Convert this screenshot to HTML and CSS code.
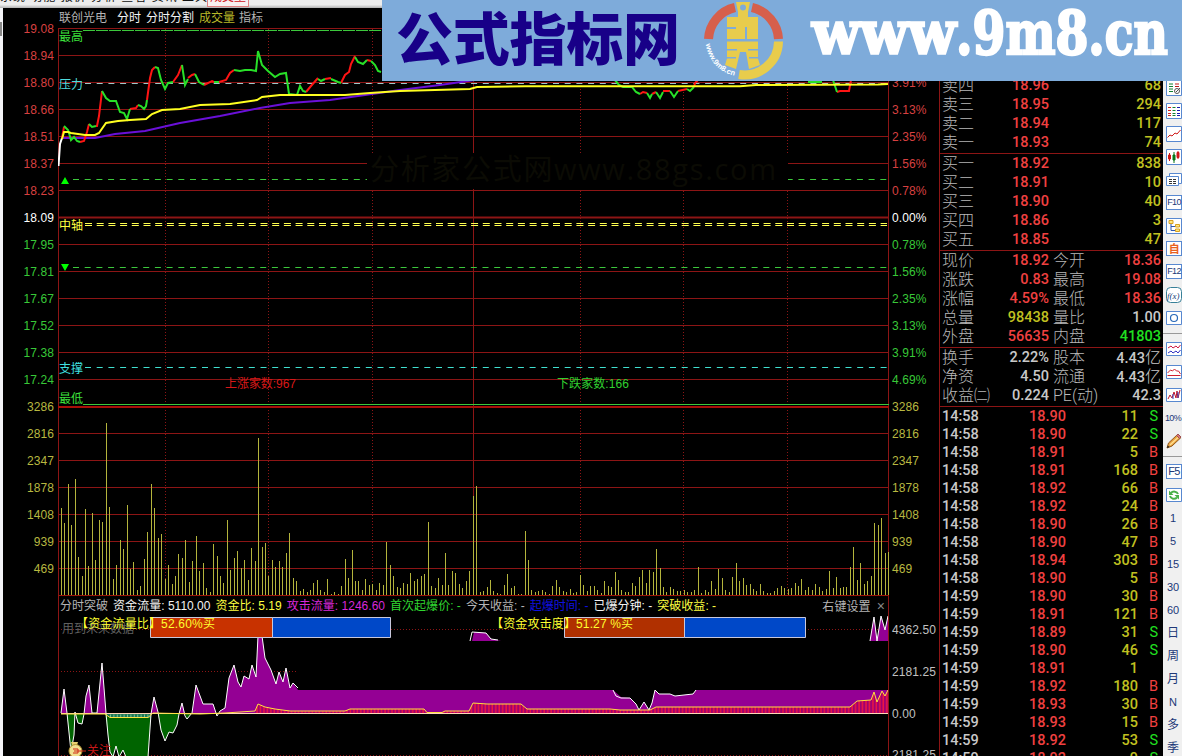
FILE: index.html
```html
<!DOCTYPE html>
<html lang="zh-CN">
<head>
  <meta charset="UTF-8" />
  <title>联创光电 分时</title>
  <link rel="stylesheet" href="styles.css">
</head>
<body>
  <div class="menubar">
    <div class="menu">系统 功能 报价 分析 查看 资讯 工具</div>
    <div class="menu-tab"><span>成交量</span></div>
  </div>

  <div class="terminal">
    <div class="edge"><i></i></div>
    <div class="axis axis-left" id="axis-left"></div>

    <div class="plot">
      <div class="plot-title">
        <span class="gray first">联创光电</span><span class="white">分时</span><span class="white">分时分割</span><span class="olive">成交量</span><span class="gray">指标</span>
      </div>

      <svg class="price" viewBox="58 26 832 570" width="832" height="570">
        <g id="grid" stroke="#8c1515"></g>
        <g stroke="#8c1515" stroke-dasharray="1 2">
          <path d="M165.5 29V595M268.5 29V595M372.5 29V595M580.5 29V595M683.5 29V595M787.5 29V595" />
        </g>
        <path d="M58.5 28V596M473.5 28V595M888.5 28V596" stroke="#8c1515" />
        <path d="M58 217.5H889" stroke="#8c1515" stroke-width="2" />
        <path d="M58 407H889" stroke="#a81008" stroke-width="2" />
        <path d="M58 595.5H889" stroke="#9c1408" />

        <path d="M83 30.5H889" stroke="#3cc83c" stroke-dasharray="12 1" />
        <path d="M85 83.5H889" stroke="#9fc9c9" stroke-dasharray="6 5.7" />
        <path d="M73 179.5H887M73 267.5H887" stroke="#3cc83c" stroke-dasharray="6 5.7" />
        <path d="M85 223.5H887M85 225.5H887" stroke="#ffff50" stroke-dasharray="7 4.7" />
        <path d="M85 367.5H887" stroke="#40e0d0" stroke-dasharray="6 5.7" />
        <path d="M83 404.5H889" stroke="#3cc83c" />
        <path d="M61 184h8l-4-7zM61 264h8l-4 7z" fill="#00ff00" />

        <path class="mask" d="M367 153H788V189H367z" />
        <text class="watermark" x="370" y="180" textLength="406">分析家公式网www.88gs.com</text>

        <g class="lines">
          <path stroke="#6a10d8" d="M61 138L95 138L115 134L145 131L180 123L220 116L260 108L290 103L330 100L365 95L400 90L440 85L475 80" />
          <path stroke="#ffffff" stroke-width="1.2" d="M58.5 166L60 144L62 138" />
          <path stroke="#ff1414" d="M62 138L64 127M80 142L84 141L87 132L89 124M96 126L97 126L99 116L102 91M130 109L136 108L138 105M147 100L150 78L152 70L155 67M173 82L178 75L182 65M188 78L192 75L195 74M204 85L212 81L214 82M219 82L226 80L230 73L234 70M306 92L311 86L318 78M325 79L331 78M341 83L345 75L349 72L351 64L355 56M367 60L371 61M640 94L643 92L647 93M652 94L656 92M663 91L670 91M678 91L687 89M694 87L695 83L698 80M837 92L840 91L849 91L851 80" />
          <path stroke="#28e028" d="M64 126L68 130L69 133L71 140L74 137L77 141L80 142M89 124L92 127L96 126M102 91L106 98L110 101L116 101L120 112L124 113L127 119L130 109M138 105L141 106L144 109L146 106L147 100M155 67L158 68L161 80L165 89L168 83L173 82M182 65L185 85L188 79M195 74L199 82L204 85M214 82L219 82M234 70L240 71L245 70L251 70L256 71L258 51L262 65L268 71L275 77L280 74L286 73L289 94L297 95L300 86L303 91L306 92M318 79L321 81L325 79M331 79L338 82L341 83M355 57L358 62L363 64L367 60M371 61L375 65L378 71L381 72M614 79L619 85L623 87L632 87L636 92L640 94M647 93L650 98L652 94M656 92L660 98L663 92M670 91L674 97L678 91M687 89L690 91L694 87M808 82L822 82M833 80L837 92" />
          <path stroke="#ffff20" d="M62 139L64 132L68 132L71 133L78 134L85 135L95 135L99 133L106 123L118 121L130 120L146 119L152 114L162 110L180 109L200 105L230 104L257 100L262 97L280 95L345 95L370 93L400 91L470 89L477 87L525 86.3L740 86.3L756 85L878 84.5L888 84" />
        </g>

        <path id="volume" stroke="#b4b43c" fill="none" />

        <g class="tags">
          <text x="59" y="41" fill="#3ce03c">最高</text>
          <text x="59" y="89" fill="#50dcdc">压力</text>
          <text x="59" y="230" fill="#ffff40">中轴</text>
          <text x="59" y="373" fill="#40e0e0">支撑</text>
          <text x="59" y="403" fill="#3ce03c">最低</text>
          <text x="225" y="388" fill="#d81818" textLength="71">上涨家数:967</text>
          <text x="557" y="388" fill="#30d030" textLength="72">下跌家数:166</text>
        </g>
      </svg>

      <div class="ind-head">
        <span class="gray">分时突破</span><span class="white">资金流量: 5110.00</span><span class="yellow">资金比: 5.19</span><span class="magenta">攻击流量: 1246.60</span><span class="green">首次起爆价: -</span><span class="gray">今天收益: -</span><span class="blue">起爆时间: -</span><span class="white">已爆分钟: -</span><span class="yellow">突破收益: -</span>
        <span class="gray settings">右键设置 <b>×</b></span>
      </div>

      <svg class="indicator" viewBox="58 614 832 142" width="832" height="142">
        <defs>
          <clipPath id="above"><path d="M58 600H890V713.5H58z" /></clipPath>
          <clipPath id="below"><path d="M58 713.5H890V756H58z" /></clipPath>
          <pattern id="hatch" width="3.46" height="4" patternUnits="userSpaceOnUse">
            <path d="M0 0H3.46V4H0z" fill="#a00070" />
            <path d="M1 0V4" stroke="#f01840" stroke-width="1.4" />
          </pattern>
        </defs>
        <path d="M61 629.5H889M61 671.5H298M61 755.5H889" stroke="#8c1515" stroke-dasharray="1 2" />
        <path clip-path="url(#above)" fill="#940094" d="M61 713L64 689L67 713H84L86 696L89 685L92 713H97L102 663L106 713H151L154 697L158 713H179L182 703L185 714H192L196 685L203 704H213L217 716L220 711L225 708L229 678L234 665L238 682L241 687L244 676L249 679L252 665L256 677L258 636H262L265 658L271 670L276 684L279 672L283 682L286 668L290 688L293 683L298 690H613L621 697L630 698L636 704L639 710L644 702L649 710L652 703L655 690L659 694L670 694L675 696L693 694L696 690H888V714H61z" />
        <path clip-path="url(#below)" fill="#006400" d="M67 713L71 752L74 735L75 713L78 723L82 724L84 713M105 713L108 735L110 752L113 757L116 746L119 757L123 750L126 757H148L151 713M158 713L161 730L165 741L169 732L173 733L177 725L179 713M185 713L187 719L192 713" />
        <path d="M472 641L474 632L486 633L491 639L501 641zM870 641L874 617L877 641L881 616L885 630L888 616V641z" fill="#940094" />
        <path d="M106 713.5H151V718H110z" fill="#207858" />
        <path d="M110 716H150" stroke="#70c890" stroke-width="3" stroke-dasharray="1 2.4" />
        <path fill="url(#hatch)" d="M255 713L258 704L265 707L275 709L290 711L345 711L350 709H424L427 712H442L445 711H469L473 703L487 704H521L527 709H610L620 710H650L656 707H850L857 701L871 700L874 692L877 702L882 691L885 696L888 690V713z" />
        <g fill="none" stroke="#ffffff">
          <path d="M61 713L64 689L67 713L71 752L74 735L75 712L78 723L82 724L84 714L86 696L89 685L92 713H97L102 663L106 713L108 735L110 752L113 757L116 746L119 757L123 750L126 757M148 757L151 714L154 697L158 712L161 730L165 741L169 732L173 733L177 725L179 714L182 703L185 716L187 719L192 713L196 685L203 704H213L217 716L220 711L225 708L229 678L234 665L238 682L241 687L244 676L249 679L252 665L256 677L258 636M262 636L265 658L271 670L276 684L279 672L283 682L286 668L290 688L293 683L298 688" />
          <path d="M470 641L472 632L486 633L491 639L498 640M613 690L616 696L621 698L630 698L636 704L639 710L644 702L649 710L652 703L655 690L659 694L670 694L675 696L693 694L696 690M870 641L874 617L877 641L881 616L885 630L888 616" />
          <path d="M61 713.5H889" stroke="#ffd8b8" />
        </g>
        <path fill="none" stroke="#ffe040" d="M61 714H105L110 717.5H148L153 713L200 714L225 713L255 711L258 704L265 707L275 709L290 711L345 711L350 709H424L427 712.5H442L445 711H469L473 703L487 704H521L527 709H610L620 710H650L656 707H850L857 701L871 700L874 692L877 702L882 691L885 696L888 690" />
        <path d="M58.5 614V756M888.5 614V756" stroke="#8c1515" />
        <text class="future" x="62" y="633">用到未来数据</text>

        <g stroke="#c8c8dc">
          <path d="M150.5 617.5H272.5V637.5H150.5z" fill="#c83200" />
          <path d="M272.5 617.5H390.5V637.5H272.5z" fill="#0048c8" />
          <path d="M564.5 617.5H684.5V637.5H564.5z" fill="#b03000" />
          <path d="M684.5 617.5H805.5V637.5H684.5z" fill="#0048c8" />
        </g>
        <g class="tags" fill="#ffff30">
          <text x="76" y="628" textLength="85">【资金流量比】</text>
          <text x="161" y="628" textLength="54">52.60%买</text>
          <text x="491" y="628" textLength="85">【资金攻击度】</text>
          <text x="576" y="628" textLength="57">51.27 %买</text>
          <text x="87" y="755" fill="#c81818">关注</text>
        </g>
        <path d="M71 742h7l-1 3h-5z" fill="#e8d070" />
        <circle cx="75.5" cy="751" r="6.5" fill="#f0e090" stroke="#b09030" />
        <path d="M73 749h5v4h-5M74 751h12" stroke="#d02818" fill="none" />
      </svg>
    </div>

    <div class="axis axis-right" id="axis-right">
      <div class="ind-axis"><span>4362.50</span><span>2181.25</span><span>0.00</span><span>2181.25</span></div>
    </div>

    <div class="quotes">
      <div class="book" id="book"></div>
      <div class="ticks" id="ticks"></div>
    </div>

    <div class="sidebar">
      <div class="tool"><svg viewBox="0 0 16 16"><path class="frame" d="M.5.5h15v15H.5z" /><path d="M3 4h4M3 6.500h4M3 9h4M3 11.500h4" stroke="#108030" /><path d="M9 4h4M9 6.500h4" stroke="#c01818" /><circle cx="11" cy="11" r="2.500" stroke="#555" /><path d="M10 12l4-4" stroke="#555" /></svg></div>
      <div class="tool"><svg viewBox="0 0 16 16"><path class="frame" d="M.5.5h15v15H.5z" /><path d="M2 4.500h3M2 7.500h3M2 10.500h3M2 12.500h3" stroke="#d02020" /><path d="M6.500 4.500h3M6.500 7.500h3M6.500 10.500h3M6.500 12.500h3" stroke="#108030" /><path d="M11 4.500h3M11 7.500h3M11 10.500h3M11 12.500h3" stroke="#1818b0" /></svg></div>
      <div class="tool"><svg viewBox="0 0 16 16"><path class="frame" d="M.5.5h15v15H.5z" /><path d="M1.500 11.500L4 9l2 1 3-3 2 1 3.500-4" stroke="#d01818" /></svg></div>
      <div class="tool"><svg viewBox="0 0 16 16"><path class="frame" d="M.5.5h15v15H.5z" /><path d="M2.500 6h2v4h-2zM11 3.500h2v5h-2z" fill="#d01818" stroke="#d01818" /><path d="M3.500 4v8M12 2v8" stroke="#d01818" /><path d="M7 6h2v5H7zM8 3v11" fill="#087818" stroke="#087818" /></svg></div>
      <div class="tool"><svg viewBox="0 0 16 16"><path class="frame" d="M3.500 1.500h12v10h-12z" /><path class="frame" d="M.5 4.500h12v9H.5z" /><path d="M3 7.500h3M7 7.500h3M3 9.500h3M7 9.500h3M3 11.500h3M7 11.500h3" stroke="#333" /></svg></div>
      <div class="tool boxed">F10</div>
      <div class="tool"><svg viewBox="0 0 16 16"><path class="frame" d="M.5.5h15v15H.5z" /><path d="M5 6v6.500h4M5 8.500h4" stroke="#3058b0" /><path d="M3 2.500h4v3H3zM9.500 6.500h4v2.500h-4zM9.500 11h4v2.500h-4z" fill="#ffe880" stroke="#d8a020" /></svg></div>
      <div class="tool boxed self">自</div>
      <div class="tool boxed">F12</div>
      <div class="tool"><svg viewBox="0 0 16 16"><rect x=".5" y=".5" width="15" height="15" rx="4" fill="#fff" stroke="#388098" /><text class="fx" x="1" y="12">f(x)</text></svg></div>
      <div class="tool"><svg viewBox="0 0 16 16"><path class="frame" d="M.5 1.500h15v13H.5z" /><circle cx="8" cy="8" r="3.500" stroke="#2868b8" stroke-width="1.200" /></svg></div>
      <hr>
      <div class="tool"><svg viewBox="0 0 16 16"><path class="frame" d="M.5 1.500h15v13H.5z" /><path d="M2 7l3-2 2 2 3-2 2 2 2.500-3" stroke="#d01840" /><path d="M2 12l3-2 2 2 3-2 2 2 2.500-3" stroke="#3030c0" /></svg></div>
      <div class="tool"><svg viewBox="0 0 16 16"><path class="frame" d="M.5 1.500h15v13H.5z" /><path d="M1.500 9l3-3 2 1 2-2 2 2h2l2 3M1.500 11.500h13" stroke="#d02030" /></svg></div>
      <div class="tool"><svg viewBox="0 0 16 16"><path class="frame" d="M.5 1.500h15v13H.5z" /><path d="M2 12l2-4 2 3 2-6 2 6 1-7 1 7 2-8" stroke="#c01830" /><path d="M7 7v5M12 5v6" stroke="#3040c0" /></svg></div>
      <div class="tool label narrow">10%</div>
      <div class="tool"><svg viewBox="0 0 16 16"><path d="M1 15l1.500-5L11 2l3.500 3L6 13z" fill="#e8a040" stroke="#905818" /><path d="M4 12l8-7.500" stroke="#ffe090" stroke-width="1.500" /><path d="M10.500 2.500L12 1l3 3-1.500 1.500z" fill="#d87878" stroke="#a05050" /><path d="M1 15l.8-2.500L3.500 14z" fill="#222" /></svg></div>
      <hr>
      <div class="tool boxed f5">F5</div>
      <div class="tool"><svg viewBox="0 0 16 16"><path class="frame" d="M.5 1.500h15v13H.5z" /><path d="M12 7a4 3.500 0 0 0-7-1M4 9a4 3.500 0 0 0 7 1.500" stroke="#48b048" stroke-width="2" /><path d="M3 3.500v4.500h4.500zM13 12.500V8H8.500z" fill="#48b048" /></svg></div>
      <div class="tool label">1</div>
      <div class="tool label">5</div>
      <div class="tool label">15</div>
      <div class="tool label">30</div>
      <div class="tool label">60</div>
      <div class="tool label cjk">日</div>
      <div class="tool label cjk">周</div>
      <div class="tool label cjk">月</div>
      <div class="tool label">N</div>
      <div class="tool label cjk">多</div>
      <div class="tool label cjk">季</div>
    </div>
  </div>

  <svg class="banner" viewBox="0 0 800 81" width="800" height="81">
    <text class="banner-cn" x="14" y="60" textLength="284">公式指标网</text>
    <g fill="none" stroke-width="9">
      <path d="M326.500 39A34 34 0 0 1 353 7.500M370 7.500A34 34 0 0 1 396.500 39" stroke="#d65f4c" />
      <path d="M396.500 41.500A34 34 0 0 1 357 74.500" stroke="#e8cc4c" />
    </g>
    <g fill="#e8cc4c">
      <path d="M354 2H368L366 12V17H376V39H365V27H363V39H345V29H354V27H345V17H356V12z" />
      <path d="M345 41.500H376V49H366V50.500H376V57H367V58.500H376L378 65L367 69L364 52H358L354 69L343 65L345 58.500H354V57H345V50.500H355V49H345z" />
      <circle cx="361" cy="7.500" r="3" fill="#7eabda" />
    </g>
    <path id="seal-arc" d="M324 44A36 36 0 0 0 354 76" fill="none" />
    <text class="seal"><textPath href="#seal-arc">www.9m8.cn</textPath></text>
    <g class="banner-url">
      <text x="430" y="54" textLength="144" lengthAdjust="spacingAndGlyphs">www</text>
      <text x="574" y="54" textLength="212" lengthAdjust="spacingAndGlyphs">.9m8.cn</text>
    </g>
  </svg>

  <script src="script.js"></script>
</body>
</html>
```
FILE: styles.css
```css
body {
  margin: 0;
  width: 1182px;
  height: 756px;
  overflow: hidden;
  position: relative;
  background: #000;
  color: #c0c0c0;
  font: 12px/18px "Liberation Sans", "Noto Sans CJK SC", sans-serif;
}
.menubar {
  display: flex;
  height: 8px;
  overflow: hidden;
  background: linear-gradient(#ececec 60%, #b0b0b0);
  color: #111;
}
.menu {
  width: 207px;
  margin-top: -12px;
  white-space: nowrap;
  letter-spacing: 1px;
}
.menu-tab {
  width: 40px;
  height: 6px;
  border: 1px solid #e08080;
  border-top: 0;
  background: #f8f0f0;
  color: #d01020;
  text-align: center;
  overflow: hidden;
}
.menu-tab span {
  display: block;
  margin-top: -12px;
}
.terminal {
  display: grid;
  grid-template-columns: 3px 55px 832px 49px 224px 19px;
  height: 748px;
}
.edge {
  background: #f4f4f8;
}
.edge i {
  display: block;
  width: 2px;
  height: 14px;
  margin-top: 14px;
  background: #888;
}

/* axes */
.axis {
  padding-top: 7px;
  letter-spacing: 0.1px;
}
.axis div.row {
  flex: none;
  height: 27px;
  line-height: 28px;
}
.axis-left {
  text-align: right;
  padding-right: 4px;
}
.axis-right {
  display: flex;
  flex-direction: column;
  padding-left: 2px;
  height: 741px;
  overflow: hidden;
}
.up { color: #d84040; }
.mid { color: #fff; }
.down { color: #38c838; }
.vol { color: #b8b840; }
.ind-axis {
  flex: none;
  order: 1;
  padding-top: 27px;
  display: flex;
  flex-direction: column;
}
.ind-axis span {
  height: 41.8px;
  line-height: 42px;
}

/* chart */
.plot-title {
  display: flex;
  gap: 5px;
  height: 18px;
  padding-left: 1px;
  line-height: 20px;
}
.plot-title .first {
  margin-right: 5px;
}
.plot-title .olive {
  margin-right: -1px;
}
.plot svg {
  display: block;
}
.gray { color: #b4b4b4; }
.white { color: #f4f4f4; }
.olive { color: #b8b828; }
.yellow { color: #ffff40; }
.magenta { color: #d828d8; }
.green { color: #30d830; }
.blue { color: #1010e0; }
.mask { fill: #000; }
.watermark {
  font: 29px "Open Sans", "Noto Sans CJK SC", sans-serif;
  fill: #0b0b04;
}
.lines path {
  fill: none;
  stroke-width: 2;
}
.tags {
  font-size: 12px;
}
.future {
  fill: #606060;
}
.ind-head {
  display: flex;
  gap: 5px;
  height: 18px;
  margin-right: 1px;
  padding-left: 1px;
  border-left: 1px solid #8c1515;
  border-right: 1px solid #8c1515;
  box-sizing: border-box;
  white-space: nowrap;
  line-height: 20px;
  letter-spacing: 0.02px;
}
.settings {
  margin-left: auto;
  padding-right: 3px;
}
.settings b {
  font-weight: normal;
  font-size: 14px;
  margin-left: 3px;
  color: #888;
}

/* quotes */
.quotes {
  border-left: 1px solid #8c1515;
  height: 748px;
  overflow: hidden;
  font-family: Roboto, "Noto Sans CJK SC", sans-serif;
  font-size: 14.5px;
  font-weight: 500;
}
.book {
  padding-top: 68px;
}
.book .line {
  display: grid;
  grid-template-columns: 52px 55px 52px 60px;
  height: 19px;
  line-height: 20px;
  padding-left: 2px;
}
.book .line span {
  text-align: right;
  white-space: nowrap;
}
.book .line .name {
  text-align: left;
  font-size: 16px;
  font-weight: 300;
  color: #b8b8b8;
}
.book .line .name:nth-child(3) {
  padding-left: 4px;
}
.book em {
  font: 300 16px/16px "Noto Sans CJK SC", sans-serif;
}
.book .rule {
  margin-top: 1px;
  border-top: 1px solid #8c1515;
}
.red { color: #f04040; }
.qty { color: #c0c020; }
.lime { color: #20e020; }
.plain { color: #c8c8c8; }
.ticks {
  margin-top: 1px;
  padding-top: 1px;
  border-top: 1px solid #8c1515;
}
.tick {
  display: grid;
  grid-template-columns: 60px 64px 72px 20px;
  height: 18px;
  padding-left: 2px;
  line-height: 18px;
}
.tick span {
  text-align: right;
}
.tick .time {
  text-align: left;
}
.tick .side {
  font-weight: normal;
}

/* right toolbar */
.sidebar {
  display: flex;
  flex-direction: column;
  background: #f0f0f0;
  padding-top: 68px;
  height: 680px;
  overflow: hidden;
  color: #203878;
}
.tool {
  height: 23px;
  flex: none;
  display: flex;
  align-items: center;
  padding-left: 3px;
}
.tool svg {
  width: 16px;
  height: 16px;
  flex: none;
  fill: none;
}
.tool .frame {
  fill: #fff;
  stroke: #5888d0;
}
.tool .fx {
  font: italic 9px "Liberation Serif", serif;
  fill: #104078;
}
.boxed {
  box-sizing: border-box;
  height: 15px;
  width: 16px;
  margin: 4px 0 4px 3px;
  padding: 0;
  justify-content: center;
  border: 1px solid #5888d0;
  background: #fff;
  font: 9px/13px "Liberation Sans", sans-serif;
  letter-spacing: -0.6px;
}
.f5 {
  font-size: 11px;
}
.self {
  color: #e86020;
  font: bold 11px/13px "Noto Sans CJK SC", sans-serif;
}
.label {
  width: 14px;
  justify-content: center;
  font-size: 11px;
}
.cjk {
  font-size: 12px;
}
.narrow {
  font-size: 9px;
  letter-spacing: -0.6px;
}
.sidebar hr {
  width: 19px;
  height: 1px;
  flex: none;
  margin: 4px 0 3px;
  border: 0;
  background: #999;
}

/* banner over the top of the screen */
.banner {
  position: absolute;
  left: 382px;
  top: 0;
  background: #7eabda;
}
.banner-cn {
  font: 900 57px "Noto Sans CJK SC", sans-serif;
  fill: #180088;
}
.banner-url {
  font: bold 60px "DejaVu Serif", serif;
  fill: #fff;
  stroke: #fff;
  stroke-width: 2.5;
}
.seal {
  font: bold 7.5px "Liberation Sans", sans-serif;
  fill: #fff;
}
```
FILE: script.js
```js
// left and right axis labels, one row every 27px
const prices = ["19.08", "18.94", "18.80", "18.66", "18.51", "18.37", "18.23", "18.09", "17.95", "17.81", "17.67", "17.52", "17.38", "17.24"];
const percents = ["", "", "3.91%", "3.13%", "2.35%", "1.56%", "0.78%", "0.00%", "0.78%", "1.56%", "2.35%", "3.13%", "3.91%", "4.69%"];
const volumes = ["3286", "2816", "2347", "1878", "1408", "939", "469"];

function axis(id, labels) {
  const html = labels.concat(volumes).map((t, i) => {
    const cls = i < 7 ? "up" : i === 7 ? "mid" : i < 14 ? "down" : "vol";
    return `<div class="row ${cls}">${t}</div>`;
  });
  document.getElementById(id).insertAdjacentHTML("afterbegin", html.join(""));
}
axis("axis-left", prices);
axis("axis-right", percents);

// horizontal grid
let grid = "";
for (let i = 0; i < 21; i++) {
  grid += `<path d="M58 ${28.5 + i * 27}H889" />`;
}
document.getElementById("grid").innerHTML = grid;

// volume per minute
const bars = [
  87,72,111,70,116,38,19,86,29,82, 35,75,73,172,88,16,30,55,46,90,
  26,33,5,9,36,63,111,87,57,61, 16,30,11,19,41,37,55,13,34,59,
  24,32,7,3,51,39,19,12,75,25, 37,44,27,35,15,47,34,157,48,52,
  19,35,28,34,28,42,62,17,14,4, 6,3,5,12,15,5,3,16,1,3,
  1,9,36,17,45,14,14,5,16,10, 11,5,12,10,53,30,19,8,
  7,12,11,22,14,16,19,21,73,9,7,17,10,42,10,24,22,11,7,14,24,99,109,
  3,4,8,15,4,2,1,10,21,7, 9,1,1,64,35,5,3,4,5,3,
  1,9,15,8,4,3,6,2,3,20, 10,4,9,9,5,2,14,9,8,23,
  15,5,3,3,12,9,18,25,12,25, 23,46,27,8,3,8,6,4,4,5,
  3,3,5,28,2,5,3,14,6,26, 17,5,3,18,32,14,17,10,11,6,
  4,11,4,2,2,4,7,9,7,6, 7,12,9,16,5,8,5,11,8,4,
  6,24,7,18,7,8,8,28,48,15, 32,11,14,19,72,70,77,42,43
];
document.getElementById("volume").setAttribute("d", bars.map((h, i) =>
  `M${Math.floor(61.3 + i * 3.461) + 0.5} 595v-${h}`).join(""));

// order book and summary, "-" draws a rule
const book = [
  ["卖四", "18.96 red", "", "68 qty"],
  ["卖三", "18.95 red", "", "294 qty"],
  ["卖二", "18.94 red", "", "117 qty"],
  ["卖一", "18.93 red", "", "74 qty"],
  "-",
  ["买一", "18.92 red", "", "838 qty"],
  ["买二", "18.91 red", "", "10 qty"],
  ["买三", "18.90 red", "", "40 qty"],
  ["买四", "18.86 red", "", "3 qty"],
  ["买五", "18.85 red", "", "47 qty"],
  "-",
  ["现价", "18.92 red", "今开", "18.36 red"],
  ["涨跌", "0.83 red", "最高", "19.08 red"],
  ["涨幅", "4.59% red", "最低", "18.36 red"],
  ["总量", "98438 qty", "量比", "1.00 plain"],
  ["外盘", "56635 red", "内盘", "41803 lime"],
  "-",
  ["换手", "2.22% plain", "股本", "4.43<em>亿</em> plain"],
  ["净资", "4.50 plain", "流通", "4.43<em>亿</em> plain"],
  ["收益㈡", "0.224 plain", "PE(动)", "42.3 plain"]
];
document.getElementById("book").innerHTML = book.map(row => {
  if (row === "-") return '<div class="rule"></div>';
  const [a, ac] = row[1].split(" ");
  const [b, bc] = row[3].split(" ");
  return `<div class="line"><span class="name">${row[0]}</span><span class="${ac}">${a}</span>` +
    `<span class="name">${row[2]}</span><span class="${bc}">${b}</span></div>`;
}).join("");

// last trades
const ticks = `14:58 18.90 11 S
14:58 18.90 22 S
14:58 18.91 5 B
14:58 18.91 168 B
14:58 18.92 66 B
14:58 18.92 24 B
14:58 18.90 26 B
14:58 18.90 47 B
14:58 18.94 303 B
14:58 18.90 5 B
14:59 18.90 30 B
14:59 18.91 121 B
14:59 18.89 31 S
14:59 18.90 46 S
14:59 18.91 1
14:59 18.92 180 B
14:59 18.93 30 B
14:59 18.93 15 B
14:59 18.92 53 S
14:59 18.92 9 S`;
document.getElementById("ticks").innerHTML = ticks.split("\n").map(line => {
  const [time, price, qty, side = ""] = line.split(" ");
  return `<div class="tick"><span class="time plain">${time}</span><span class="red">${price}</span>` +
    `<span class="qty">${qty}</span><span class="side ${side === "S" ? "lime" : "red"}">${side}</span></div>`;
}).join("");
```
